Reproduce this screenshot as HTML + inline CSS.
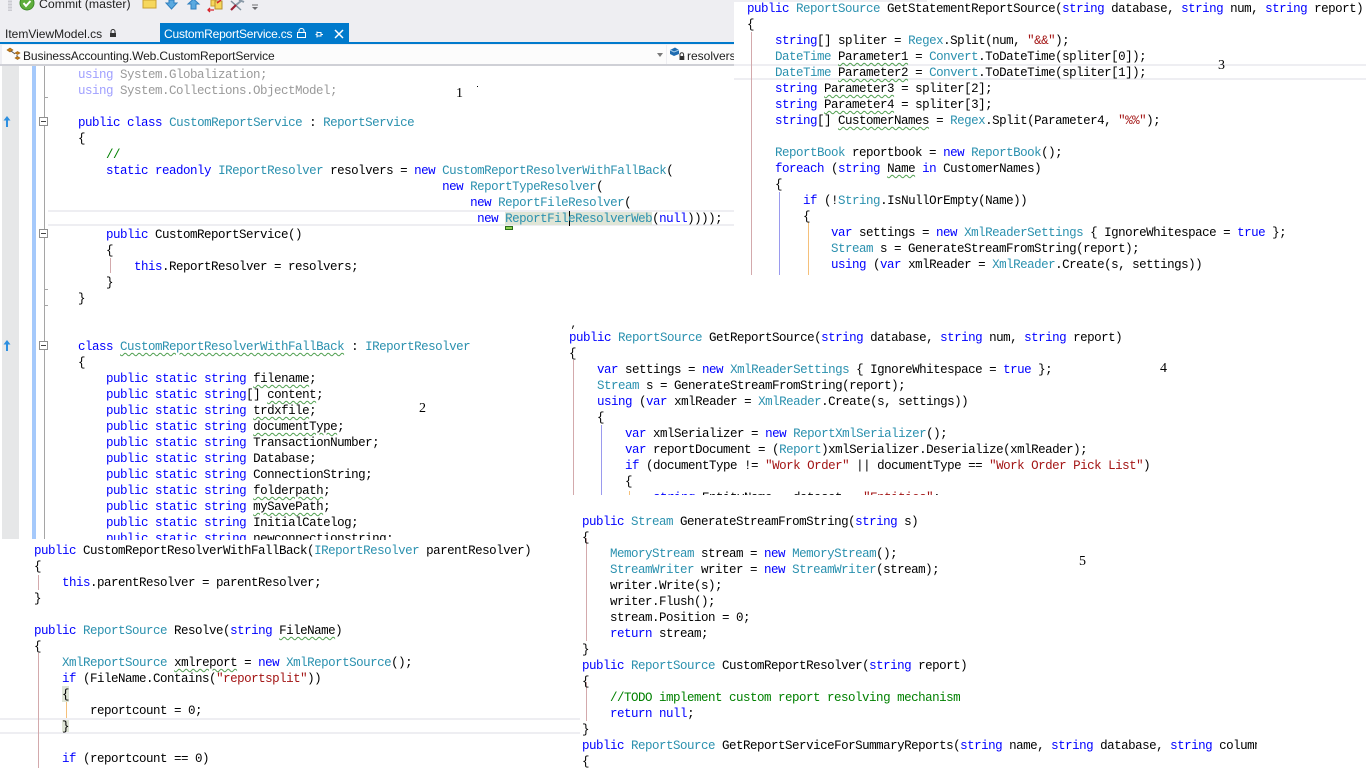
<!DOCTYPE html>
<html><head><meta charset="utf-8"><style>
html,body{margin:0;padding:0;width:1366px;height:768px;overflow:hidden;background:#fff}
.a{position:absolute}
pre{position:absolute;margin:0;font:12.5px/16px "Liberation Mono",monospace;letter-spacing:-.5px;color:#000;white-space:pre}
.p{position:absolute;overflow:hidden;background:#fff}
b{font-weight:normal;color:#0000ff}
i{font-style:normal;color:#2b91af}
u{text-decoration:underline wavy #4f9f4f 1px;text-underline-offset:2px}
em{font-style:normal;color:#a31515}
s{text-decoration:none;color:#008000}
.g{color:#9a9a9a}.g b{color:#a0a0ff}
.n{position:absolute;font:14px/16px "Liberation Serif",serif;color:#000}
.l{position:absolute;width:1px}
.pk{background:#d3a9ac}.bl{background:#9a9aee}.or{background:#f5c07a}
.f{position:absolute;left:39px;width:7px;height:7px;border:1px solid #8f8f8f;background:#fff}
.f:after{content:"";position:absolute;left:1px;top:3px;width:5px;height:1px;background:#444}
.t{position:absolute;left:44px;width:4px;height:1px;background:#a5a5a5}
.ui{position:absolute;font:12px/16px "Liberation Sans",sans-serif;white-space:pre;color:#1e1e1e}
</style></head><body>

<!-- chrome -->
<div class="a" style="left:0;top:0;width:1366px;height:42px;background:#eeeef2"></div>
<div class="a" style="left:8px;top:0;width:4px;height:11px;background-image:radial-gradient(#a8a8b0 45%,transparent 50%);background-size:2px 3px"></div>
<svg class="a" style="left:19px;top:0" width="16" height="12" viewBox="0 0 16 12"><circle cx="8" cy="3" r="7" fill="#5fae3c" stroke="#3d8a2a"/><path d="M4.5 3l2.5 3 4.500-5" fill="none" stroke="#fff" stroke-width="2"/></svg>
<div class="ui" style="left:39px;top:-4px;font-size:12.300px">Commit (master)</div>
<svg class="a" style="left:141px;top:0" width="120" height="14" viewBox="0 0 120 14">
<path d="M2 0h13v8H2z" fill="#f6d75c" stroke="#c9a02f"/>
<path d="M28 0h5v3h3l-5.500 6L25 3h3z" fill="#5aa9e0" stroke="#2f7fbf"/>
<path d="M50 9V4h-3l5.500-5L58 4h-3v5z" fill="#5aa9e0" stroke="#2f7fbf"/>
<path d="M70 0h5v6h-5z" fill="#f6d75c" stroke="#c9a02f"/><path d="M74 1h7v8h-7z" fill="#f6d75c" stroke="#b59030"/><path d="M67 10h6M69 8l-2 2 2 2" fill="none" stroke="#d8232a" stroke-width="1.300"/><path d="M76 3l4-3" stroke="#d8232a" stroke-width="1.500"/>
<path d="M90 1l10 9" stroke="#7f8f9c" stroke-width="1.500"/><path d="M95 5l5-4" stroke="#8a9aa8" stroke-width="2"/><path d="M90 10l5-5" stroke="#9b2335" stroke-width="2.200"/><path d="M98 0l5 2" stroke="#8a9aa8" stroke-width="2"/>
<path d="M111 5h6" stroke="#6d6d70"/><path d="M111 7h6l-3 3z" fill="#6d6d70"/>
</svg>
<div class="a" style="left:927px;top:0;width:439px;height:2px;background:#fff"></div>

<!-- tabs -->
<div class="ui" style="left:5px;top:26px;font-size:12px">ItemViewModel.cs</div>
<svg class="a" style="left:109px;top:29px" width="8" height="9" viewBox="0 0 8 9"><path d="M2 4V2.500a2 2 0 0 1 4 0V4" fill="none" stroke="#333"/><path d="M1 4h6v4H1z" fill="#333"/></svg>
<div class="a" style="left:160px;top:23px;width:189px;height:19px;background:#007acc"></div>
<div class="ui" style="left:164px;top:26px;color:#fff;font-size:12px;letter-spacing:-.2px">CustomReportService.cs</div>
<svg class="a" style="left:296px;top:28px" width="50" height="12" viewBox="0 0 50 12"><path d="M3 4V2.500a2.500 2 0 0 1 5 0V4" fill="none" stroke="#fff"/><path d="M1.500 4.500h8v5h-8z" fill="none" stroke="#fff"/><path d="M21 3.500v6M21 6.500h-1.500M21 4.500h4v3.500h-4M25 6.500h2" fill="none" stroke="#fff"/><path d="M39 2l8 8M47 2l-8 8" stroke="#fff" stroke-width="1.500"/></svg>
<div class="a" style="left:0;top:42px;width:1366px;height:2px;background:#007acc"></div>

<!-- nav bar -->
<div class="a" style="left:0;top:44px;width:734px;height:22px;background:#eeeef2"></div>
<div class="a" style="left:2px;top:45px;width:664px;height:19px;background:#fcfcfc"></div>
<div class="a" style="left:667px;top:45px;width:67px;height:19px;background:#fcfcfc"></div>
<div class="a" style="left:0;top:64px;width:734px;height:2px;background:#cfd0d6"></div>
<svg class="a" style="left:6px;top:46px" width="15" height="16" viewBox="0 0 15 16"><path d="M1 4l3-2 3 2-3 2z" fill="#c27d1a" stroke="#9c5f10" stroke-width=".6"/><path d="M9 7l2.500-1.500L14 7l-2.500 1.500zM9 12l2.500-1.500L14 12l-2.500 1.500z" fill="#c27d1a" stroke="#9c5f10" stroke-width=".6"/><path d="M5 5l4 3M11 9v2" stroke="#555"/></svg>
<div class="ui" style="left:23px;top:48px;letter-spacing:-.12px">BusinessAccounting.Web.CustomReportService</div>
<svg class="a" style="left:656px;top:52px" width="8" height="6"><path d="M1 1h6L4 5z" fill="#7a7a7a"/></svg>
<svg class="a" style="left:669px;top:46px" width="16" height="16" viewBox="0 0 16 16"><path d="M1 4l5-2.500L10 4v4L5 10 1 8z" fill="#1f6cb0"/><path d="M1 4l4 2 5-2" fill="none" stroke="#a5cdea"/><path d="M11 10V8.500a1.800 1.800 0 0 1 3.600 0V10" fill="none" stroke="#333"/><path d="M10.500 10h4.800v4h-4.800z" fill="#333"/></svg>
<div class="ui" style="left:687px;top:48px">resolvers</div>

<!-- panel 1 -->
<div class="p" style="left:0;top:66px;width:734px;height:474px">
 <div class="a" style="left:2px;top:0;width:17px;height:473px;background:#e6e7e8"></div>
 <div class="a" style="left:32px;top:0;width:4px;height:473px;background:#a5c9fb"></div>
 <div class="a" style="left:44px;top:0;width:1px;height:473px;background:#a5a5a5"></div>
 <div class="a" style="left:48px;top:144px;width:686px;height:12px;border:solid #eeeef2;border-width:2px 0"></div>
 <div class="a" style="left:505px;top:146px;width:147px;height:13px;background:#dfe5d6"></div>
 <div class="a" style="left:505px;top:160px;width:6px;height:2px;border:1px solid #2c6e1c;background:#8fd14f"></div>
 <div class="l" style="left:569px;top:145px;height:15px;background:#000"></div>
 <div class="l pk" style="left:110px;top:192px;height:15px"></div>
 <div class="f" style="top:51px"></div><div class="f" style="top:163px"></div><div class="f" style="top:275px"></div>
 <div class="t" style="top:31px"></div><div class="t" style="top:223px"></div><div class="t" style="top:239px"></div>
 <svg class="a" style="left:2px;top:49px" width="10" height="13" viewBox="0 0 10 13"><path d="M5 1L1.500 5.500h2.500V12h2V5.500h2.500z" fill="#2d8fe0"/></svg>
 <svg class="a" style="left:2px;top:273px" width="10" height="13" viewBox="0 0 10 13"><path d="M5 1L1.500 5.500h2.500V12h2V5.500h2.500z" fill="#2d8fe0"/></svg>
<pre style="left:78px;top:1px"><span class="g"><b>using</b> System.Globalization;
<b>using</b> System.Collections.ObjectModel;</span>

<b>public</b> <b>class</b> <i>CustomReportService</i> : <i>ReportService</i>
{
    <s>//</s>
    <b>static</b> <b>readonly</b> <i>IReportResolver</i> resolvers = <b>new</b> <i>CustomReportResolverWithFallBack</i>(
                                                    <b>new</b> <i>ReportTypeResolver</i>(
                                                        <b>new</b> <i>ReportFileResolver</i>(
                                                         <b>new</b> <i>ReportFileResolverWeb</i>(<b>null</b>))));
    <b>public</b> CustomReportService()
    {
        <b>this</b>.ReportResolver = resolvers;
    }
}


<b>class</b> <i><u>CustomReportResolverWithFallBack</u></i> : <i>IReportResolver</i>
{
    <b>public</b> <b>static</b> <b>string</b> <u>filename</u>;
    <b>public</b> <b>static</b> <b>string</b>[] <u>content</u>;
    <b>public</b> <b>static</b> <b>string</b> <u>trdxfile</u>;
    <b>public</b> <b>static</b> <b>string</b> <u>documentType</u>;
    <b>public</b> <b>static</b> <b>string</b> TransactionNumber;
    <b>public</b> <b>static</b> <b>string</b> Database;
    <b>public</b> <b>static</b> <b>string</b> ConnectionString;
    <b>public</b> <b>static</b> <b>string</b> <u>folderpath</u>;
    <b>public</b> <b>static</b> <b>string</b> <u>mySavePath</u>;
    <b>public</b> <b>static</b> <b>string</b> InitialCatelog;
    <b>public</b> <b>static</b> <b>string</b> newconnectionstring;</pre>
</div>
<div class="a" style="left:477px;top:86px;width:1px;height:1px;background:#000"></div>
<div class="n" style="left:456px;top:86px">1</div>
<div class="n" style="left:419px;top:401px">2</div>

<!-- panel 2 -->
<div class="p" style="left:0;top:540px;width:580px;height:228px">
 <div class="a" style="left:62px;top:146px;width:7px;height:16px;background:#dfe5d6"></div>
 <div class="a" style="left:62px;top:178px;width:7px;height:16px;background:#dfe5d6"></div>
 <div class="a" style="left:0;top:178px;width:580px;border:solid #eeeef2;border-width:2px 0;box-sizing:border-box;height:16px"></div>
 <div class="l pk" style="left:38px;top:35px;height:15px"></div>
 <div class="l pk" style="left:38px;top:113px;height:115px"></div>
 <div class="l or" style="left:66px;top:162px;height:16px"></div>
<pre style="left:34px;top:3px"><b>public</b> CustomReportResolverWithFallBack(<i>IReportResolver</i> parentResolver)
{
    <b>this</b>.parentResolver = parentResolver;
}

<b>public</b> <i>ReportSource</i> Resolve(<b>string</b> <u>FileName</u>)
{
    <i>XmlReportSource</i> <u>xmlreport</u> = <b>new</b> <i>XmlReportSource</i>();
    <b>if</b> (FileName.Contains(<em>"reportsplit"</em>))
    {
        reportcount = 0;
    }

    <b>if</b> (reportcount == 0)</pre>
</div>

<!-- panel 3 -->
<div class="p" style="left:734px;top:2px;width:632px;height:273px">
 <div class="a" style="left:0;top:62px;width:632px;height:2px;background:#eeeef2"></div>
 <div class="a" style="left:0;top:76px;width:632px;height:2px;background:#eeeef2"></div>
 <div class="l pk" style="left:17px;top:30px;height:243px"></div>
 <div class="l bl" style="left:45px;top:190px;height:83px"></div>
 <div class="l or" style="left:74px;top:220px;height:53px"></div>
<pre style="left:13px;top:-1px"><b>public</b> <i>ReportSource</i> GetStatementReportSource(<b>string</b> database, <b>string</b> num, <b>string</b> report)
{
    <b>string</b>[] spliter = <i>Regex</i>.Split(num, <em>"&amp;&amp;"</em>);
    <i>DateTime</i> <u>Parameter1</u> = <i>Convert</i>.ToDateTime(spliter[0]);
    <i>DateTime</i> <u>Parameter2</u> = <i>Convert</i>.ToDateTime(spliter[1]);
    <b>string</b> <u>Parameter3</u> = spliter[2];
    <b>string</b> <u>Parameter4</u> = spliter[3];
    <b>string</b>[] <u>CustomerNames</u> = <i>Regex</i>.Split(Parameter4, <em>"%%"</em>);

    <i>ReportBook</i> reportbook = <b>new</b> <i>ReportBook</i>();
    <b>foreach</b> (<b>string</b> <u>Name</u> <b>in</b> CustomerNames)
    {
        <b>if</b> (!<i>String</i>.IsNullOrEmpty(Name))
        {
            <b>var</b> settings = <b>new</b> <i>XmlReaderSettings</i> { IgnoreWhitespace = <b>true</b> };
            <i>Stream</i> s = GenerateStreamFromString(report);
            <b>using</b> (<b>var</b> xmlReader = <i>XmlReader</i>.Create(s, settings))</pre>
</div>
<div class="n" style="left:1218px;top:58px">3</div>

<!-- panel 4 -->
<div class="a" style="left:570px;top:321px;font:11px/8px 'Liberation Mono',monospace">‚</div>
<div class="p" style="left:566px;top:329px;width:620px;height:166px">
 <div class="l pk" style="left:7px;top:31px;height:135px"></div>
 <div class="l bl" style="left:35px;top:96px;height:70px"></div>
 <div class="l or" style="left:63px;top:162px;height:4px"></div>
<pre style="left:3px;top:1px"><b>public</b> <i>ReportSource</i> GetReportSource(<b>string</b> database, <b>string</b> num, <b>string</b> report)
{
    <b>var</b> settings = <b>new</b> <i>XmlReaderSettings</i> { IgnoreWhitespace = <b>true</b> };
    <i>Stream</i> s = GenerateStreamFromString(report);
    <b>using</b> (<b>var</b> xmlReader = <i>XmlReader</i>.Create(s, settings))
    {
        <b>var</b> xmlSerializer = <b>new</b> <i>ReportXmlSerializer</i>();
        <b>var</b> reportDocument = (<i>Report</i>)xmlSerializer.Deserialize(xmlReader);
        <b>if</b> (documentType != <em>"Work Order"</em> || documentType == <em>"Work Order Pick List"</em>)
        {
            <b>string</b> EntityName = dataset = <em>"Entities"</em>;</pre>
</div>
<div class="n" style="left:1160px;top:361px">4</div>

<!-- panel 5 -->
<div class="p" style="left:580px;top:507px;width:677px;height:261px">
 <div class="l pk" style="left:6px;top:31px;height:103px"></div>
 <div class="l pk" style="left:6px;top:175px;height:39px"></div>
<pre style="left:2px;top:7px"><b>public</b> <i>Stream</i> GenerateStreamFromString(<b>string</b> s)
{
    <i>MemoryStream</i> stream = <b>new</b> <i>MemoryStream</i>();
    <i>StreamWriter</i> writer = <b>new</b> <i>StreamWriter</i>(stream);
    writer.Write(s);
    writer.Flush();
    stream.Position = 0;
    <b>return</b> stream;
}
<b>public</b> <i>ReportSource</i> CustomReportResolver(<b>string</b> report)
{
    <s>//TODO implement custom report resolving mechanism</s>
    <b>return</b> <b>null</b>;
}
<b>public</b> <i>ReportSource</i> GetReportServiceForSummaryReports(<b>string</b> name, <b>string</b> database, <b>string</b> column)
{</pre>
</div>
<div class="n" style="left:1079px;top:554px">5</div>
</body></html>
